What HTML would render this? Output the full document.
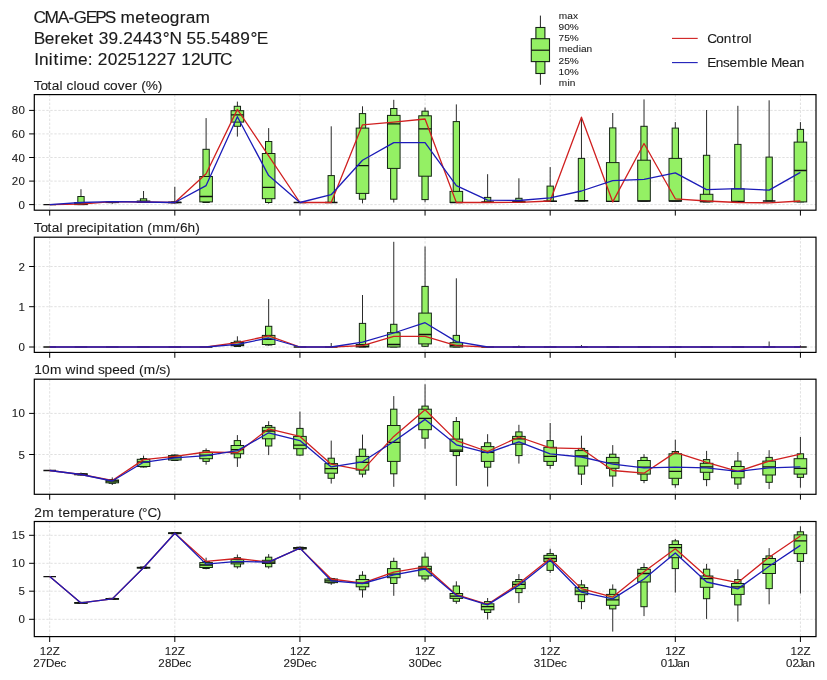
<!DOCTYPE html>
<html><head><meta charset="utf-8"><style>
html,body{margin:0;padding:0;background:#fff;width:827px;height:680px;overflow:hidden}
svg{display:block;will-change:transform}
text{font-family:"Liberation Sans",sans-serif}
</style></head><body>
<svg width="827" height="680" viewBox="0 0 827 680">
<rect width="827" height="680" fill="#fff"/>
<text transform="translate(34.3,23.1) scale(1.06,1)" x="-0.82 9.62 22.21 32.36 37.09 48.48 57.45 66.44 76.54 81.39 95.2 104.79 109.83 118.75 127.8 137.22 142.84 152.11" y="0" font-size="16.32" fill="#1a1a1a" stroke="#1a1a1a" stroke-width="0.13" style="font-kerning:none">CMA-GEPS meteogram</text>
<text transform="translate(34.3,43.9) scale(1.06,1)" x="-0.46 9.9 19.17 24.65 33.63 41.58 50.91 56.07 60.73 69.98 79.18 83.84 93.08 102.32 111.57 121.1 127.53 138.9 143.56 152.81 162.01 166.67 175.91 185.16 194.4 203.93 209.97" y="0" font-size="16.32" fill="#1a1a1a" stroke="#1a1a1a" stroke-width="0.13" style="font-kerning:none">Bereket 39.2443°N 55.5489°E</text>
<text transform="translate(34.3,64.5) scale(1.06,1)" x="-0.12 4.35 13.7 18.11 23.43 27.54 41.35 50.53 55.29 59.95 69.19 78.44 87.68 96.93 106.17 115.41 124.66 133.86 138.52 147.76 156.35 167.01 175.18" y="0" font-size="16.32" fill="#1a1a1a" stroke="#1a1a1a" stroke-width="0.13" style="font-kerning:none">Initime: 20251227 12UTC</text>
<g>
<line x1="540.4" y1="15.6" x2="540.4" y2="84.8" stroke="#222" stroke-width="1"/>
<rect x="535.9" y="27.5" width="9" height="46" fill="#94f064" stroke="#142414" stroke-width="1.1"/>
<rect x="531.3" y="38.7" width="18.2" height="22.9" fill="#94f064" stroke="#142414" stroke-width="1.1"/>
<line x1="531.3" y1="50.2" x2="549.5" y2="50.2" stroke="#111" stroke-width="1.2"/>
</g>
<text transform="translate(558.5,18.5) scale(1.06,1)" x="0.16 8.22 13.6" y="0" font-size="9.54" fill="#1a1a1a" stroke="#1a1a1a" stroke-width="0.08" style="font-kerning:none">max</text>
<text transform="translate(558.5,29.8) scale(1.06,1)" x="0.05 5.45 10.6" y="0" font-size="9.54" fill="#1a1a1a" stroke="#1a1a1a" stroke-width="0.08" style="font-kerning:none">90%</text>
<text transform="translate(558.5,41.1) scale(1.06,1)" x="0.05 5.45 10.6" y="0" font-size="9.54" fill="#1a1a1a" stroke="#1a1a1a" stroke-width="0.08" style="font-kerning:none">75%</text>
<text transform="translate(558.5,52.4) scale(1.06,1)" x="0.16 8.23 13.54 19 21.19 26.48" y="0" font-size="9.54" fill="#1a1a1a" stroke="#1a1a1a" stroke-width="0.08" style="font-kerning:none">median</text>
<text transform="translate(558.5,63.7) scale(1.06,1)" x="0.05 5.45 10.6" y="0" font-size="9.54" fill="#1a1a1a" stroke="#1a1a1a" stroke-width="0.08" style="font-kerning:none">25%</text>
<text transform="translate(558.5,75) scale(1.06,1)" x="0.05 5.45 10.6" y="0" font-size="9.54" fill="#1a1a1a" stroke="#1a1a1a" stroke-width="0.08" style="font-kerning:none">10%</text>
<text transform="translate(558.5,86.3) scale(1.06,1)" x="0.16 8.39 10.67" y="0" font-size="9.54" fill="#1a1a1a" stroke="#1a1a1a" stroke-width="0.08" style="font-kerning:none">min</text>
<line x1="672" y1="38.4" x2="697.7" y2="38.4" stroke="#d02020" stroke-width="1.1"/>
<line x1="672" y1="62.6" x2="697.7" y2="62.6" stroke="#1c1cb8" stroke-width="1.1"/>
<text transform="translate(707.9,42.8) scale(1.06,1)" x="-0.65 7.93 15.07 22.74 26.99 31.29 38.41" y="0" font-size="12.87" fill="#1a1a1a" stroke="#1a1a1a" stroke-width="0.1" style="font-kerning:none">Control</text>
<text transform="translate(707.9,67) scale(1.06,1)" x="-0.67 7.3 14.28 20.43 27.75 38.76 46.14 49.1 56.24 59.44 69.69 76.73 83.87" y="0" font-size="12.87" fill="#1a1a1a" stroke="#1a1a1a" stroke-width="0.1" style="font-kerning:none">Ensemble Mean</text>
<text transform="translate(34.3,89.8) scale(1.06,1)" x="-0.43 5.97 12.56 16.53 23.81 26.87 30.42 36.97 39.92 47.08 54.37 61.64 65.19 71.5 78.78 85.35 92.69 97.23 100.95 105.06 116.35" y="0" font-size="12.91" fill="#1a1a1a" stroke="#1a1a1a" stroke-width="0.1" style="font-kerning:none">Total cloud cover (%)</text>
<clipPath id="c0"><rect x="34.3" y="94.6" width="781.7" height="115.6"/></clipPath>
<g stroke="#e0e0e0" stroke-width="1" stroke-dasharray="2.4,1.6">
<line x1="49.7" y1="94.6" x2="49.7" y2="210.2"/>
<line x1="174.82" y1="94.6" x2="174.82" y2="210.2"/>
<line x1="299.94" y1="94.6" x2="299.94" y2="210.2"/>
<line x1="425.06" y1="94.6" x2="425.06" y2="210.2"/>
<line x1="550.18" y1="94.6" x2="550.18" y2="210.2"/>
<line x1="675.3" y1="94.6" x2="675.3" y2="210.2"/>
<line x1="800.42" y1="94.6" x2="800.42" y2="210.2"/>
<line x1="34.3" y1="204.6" x2="816" y2="204.6"/>
<line x1="34.3" y1="181.1" x2="816" y2="181.1"/>
<line x1="34.3" y1="157.5" x2="816" y2="157.5"/>
<line x1="34.3" y1="133.9" x2="816" y2="133.9"/>
<line x1="34.3" y1="110.4" x2="816" y2="110.4"/>
</g>
<g clip-path="url(#c0)">
<line x1="49.7" y1="204.6" x2="49.7" y2="204.6" stroke="#2a2a2a" stroke-width="1"/>
<rect x="46.55" y="204.6" width="6.3" height="0" fill="#94f064" stroke="#142414" stroke-width="1"/>
<rect x="43.4" y="204.6" width="12.6" height="0" fill="#94f064" stroke="#142414" stroke-width="1"/>
<line x1="43.4" y1="204.6" x2="56" y2="204.6" stroke="#111" stroke-width="1.3"/>
<line x1="80.98" y1="189.2" x2="80.98" y2="204.6" stroke="#2a2a2a" stroke-width="1"/>
<rect x="77.83" y="196.5" width="6.3" height="8.1" fill="#94f064" stroke="#142414" stroke-width="1"/>
<rect x="74.68" y="202.5" width="12.6" height="2.1" fill="#94f064" stroke="#142414" stroke-width="1"/>
<line x1="74.68" y1="204" x2="87.28" y2="204" stroke="#111" stroke-width="1.3"/>
<line x1="112.26" y1="201" x2="112.26" y2="203.7" stroke="#2a2a2a" stroke-width="1"/>
<rect x="109.11" y="202" width="6.3" height="0.6" fill="#94f064" stroke="#142414" stroke-width="1"/>
<rect x="105.96" y="202.3" width="12.6" height="0.3" fill="#94f064" stroke="#142414" stroke-width="1"/>
<line x1="105.96" y1="202.3" x2="118.56" y2="202.3" stroke="#111" stroke-width="1.3"/>
<line x1="143.54" y1="191" x2="143.54" y2="203" stroke="#2a2a2a" stroke-width="1"/>
<rect x="140.39" y="198.8" width="6.3" height="3.7" fill="#94f064" stroke="#142414" stroke-width="1"/>
<rect x="137.24" y="201" width="12.6" height="1.5" fill="#94f064" stroke="#142414" stroke-width="1"/>
<line x1="137.24" y1="202" x2="149.84" y2="202" stroke="#111" stroke-width="1.3"/>
<line x1="174.82" y1="186.8" x2="174.82" y2="203.5" stroke="#2a2a2a" stroke-width="1"/>
<rect x="171.67" y="201.8" width="6.3" height="1" fill="#94f064" stroke="#142414" stroke-width="1"/>
<rect x="168.52" y="202.2" width="12.6" height="0.6" fill="#94f064" stroke="#142414" stroke-width="1"/>
<line x1="168.52" y1="202.4" x2="181.12" y2="202.4" stroke="#111" stroke-width="1.3"/>
<line x1="206.1" y1="118.1" x2="206.1" y2="202.5" stroke="#2a2a2a" stroke-width="1"/>
<rect x="202.95" y="149.3" width="6.3" height="53.2" fill="#94f064" stroke="#142414" stroke-width="1"/>
<rect x="199.8" y="176.5" width="12.6" height="25.4" fill="#94f064" stroke="#142414" stroke-width="1"/>
<line x1="199.8" y1="196.5" x2="212.4" y2="196.5" stroke="#111" stroke-width="1.3"/>
<line x1="237.38" y1="101.6" x2="237.38" y2="136.6" stroke="#2a2a2a" stroke-width="1"/>
<rect x="234.23" y="106.3" width="6.3" height="20" fill="#94f064" stroke="#142414" stroke-width="1"/>
<rect x="231.08" y="110.7" width="12.6" height="11.4" fill="#94f064" stroke="#142414" stroke-width="1"/>
<line x1="231.08" y1="114.9" x2="243.68" y2="114.9" stroke="#111" stroke-width="1.3"/>
<line x1="268.66" y1="128.1" x2="268.66" y2="203.7" stroke="#2a2a2a" stroke-width="1"/>
<rect x="265.51" y="141.5" width="6.3" height="61" fill="#94f064" stroke="#142414" stroke-width="1"/>
<rect x="262.36" y="153.5" width="12.6" height="45.2" fill="#94f064" stroke="#142414" stroke-width="1"/>
<line x1="262.36" y1="187.4" x2="274.96" y2="187.4" stroke="#111" stroke-width="1.3"/>
<line x1="299.94" y1="202.5" x2="299.94" y2="202.5" stroke="#2a2a2a" stroke-width="1"/>
<rect x="296.79" y="202.5" width="6.3" height="0" fill="#94f064" stroke="#142414" stroke-width="1"/>
<rect x="293.64" y="202.5" width="12.6" height="0" fill="#94f064" stroke="#142414" stroke-width="1"/>
<line x1="293.64" y1="202.5" x2="306.24" y2="202.5" stroke="#111" stroke-width="1.3"/>
<line x1="331.22" y1="126.3" x2="331.22" y2="202.5" stroke="#2a2a2a" stroke-width="1"/>
<rect x="328.07" y="175.6" width="6.3" height="26.9" fill="#94f064" stroke="#142414" stroke-width="1"/>
<rect x="324.92" y="202.5" width="12.6" height="0" fill="#94f064" stroke="#142414" stroke-width="1"/>
<line x1="324.92" y1="202.5" x2="337.52" y2="202.5" stroke="#111" stroke-width="1.3"/>
<line x1="362.5" y1="106.3" x2="362.5" y2="203.4" stroke="#2a2a2a" stroke-width="1"/>
<rect x="359.35" y="113.6" width="6.3" height="85.6" fill="#94f064" stroke="#142414" stroke-width="1"/>
<rect x="356.2" y="128.1" width="12.6" height="65.3" fill="#94f064" stroke="#142414" stroke-width="1"/>
<line x1="356.2" y1="165.6" x2="368.8" y2="165.6" stroke="#111" stroke-width="1.3"/>
<line x1="393.78" y1="99.8" x2="393.78" y2="202.5" stroke="#2a2a2a" stroke-width="1"/>
<rect x="390.63" y="108.5" width="6.3" height="90.7" fill="#94f064" stroke="#142414" stroke-width="1"/>
<rect x="387.48" y="115.4" width="12.6" height="53" fill="#94f064" stroke="#142414" stroke-width="1"/>
<line x1="387.48" y1="123.9" x2="400.08" y2="123.9" stroke="#111" stroke-width="1.3"/>
<line x1="425.06" y1="107.6" x2="425.06" y2="202.3" stroke="#2a2a2a" stroke-width="1"/>
<rect x="421.91" y="111.2" width="6.3" height="88.4" fill="#94f064" stroke="#142414" stroke-width="1"/>
<rect x="418.76" y="115.8" width="12.6" height="60.4" fill="#94f064" stroke="#142414" stroke-width="1"/>
<line x1="418.76" y1="128.8" x2="431.36" y2="128.8" stroke="#111" stroke-width="1.3"/>
<line x1="456.34" y1="104.4" x2="456.34" y2="202.5" stroke="#2a2a2a" stroke-width="1"/>
<rect x="453.19" y="121.6" width="6.3" height="80.9" fill="#94f064" stroke="#142414" stroke-width="1"/>
<rect x="450.04" y="191.4" width="12.6" height="11.1" fill="#94f064" stroke="#142414" stroke-width="1"/>
<line x1="450.04" y1="202.5" x2="462.64" y2="202.5" stroke="#111" stroke-width="1.3"/>
<line x1="487.62" y1="174.2" x2="487.62" y2="202.5" stroke="#2a2a2a" stroke-width="1"/>
<rect x="484.47" y="197.4" width="6.3" height="5.1" fill="#94f064" stroke="#142414" stroke-width="1"/>
<rect x="481.32" y="202.5" width="12.6" height="0" fill="#94f064" stroke="#142414" stroke-width="1"/>
<line x1="481.32" y1="202" x2="493.92" y2="202" stroke="#111" stroke-width="1.3"/>
<line x1="518.9" y1="178.3" x2="518.9" y2="202" stroke="#2a2a2a" stroke-width="1"/>
<rect x="515.75" y="198.3" width="6.3" height="3.7" fill="#94f064" stroke="#142414" stroke-width="1"/>
<rect x="512.6" y="201.8" width="12.6" height="0.2" fill="#94f064" stroke="#142414" stroke-width="1"/>
<line x1="512.6" y1="201.8" x2="525.2" y2="201.8" stroke="#111" stroke-width="1.3"/>
<line x1="550.18" y1="167.1" x2="550.18" y2="201.5" stroke="#2a2a2a" stroke-width="1"/>
<rect x="547.03" y="186.1" width="6.3" height="15.4" fill="#94f064" stroke="#142414" stroke-width="1"/>
<rect x="543.88" y="201" width="12.6" height="0.5" fill="#94f064" stroke="#142414" stroke-width="1"/>
<line x1="543.88" y1="201.3" x2="556.48" y2="201.3" stroke="#111" stroke-width="1.3"/>
<line x1="581.46" y1="117.2" x2="581.46" y2="201" stroke="#2a2a2a" stroke-width="1"/>
<rect x="578.31" y="158.4" width="6.3" height="42.6" fill="#94f064" stroke="#142414" stroke-width="1"/>
<rect x="575.16" y="200.5" width="12.6" height="0.5" fill="#94f064" stroke="#142414" stroke-width="1"/>
<line x1="575.16" y1="200.7" x2="587.76" y2="200.7" stroke="#111" stroke-width="1.3"/>
<line x1="612.74" y1="113" x2="612.74" y2="201.4" stroke="#2a2a2a" stroke-width="1"/>
<rect x="609.59" y="127.9" width="6.3" height="73.5" fill="#94f064" stroke="#142414" stroke-width="1"/>
<rect x="606.44" y="162.6" width="12.6" height="38.8" fill="#94f064" stroke="#142414" stroke-width="1"/>
<line x1="606.44" y1="201.4" x2="619.04" y2="201.4" stroke="#111" stroke-width="1.3"/>
<line x1="644.02" y1="99.4" x2="644.02" y2="201" stroke="#2a2a2a" stroke-width="1"/>
<rect x="640.87" y="126.3" width="6.3" height="74.7" fill="#94f064" stroke="#142414" stroke-width="1"/>
<rect x="637.72" y="160.2" width="12.6" height="40.8" fill="#94f064" stroke="#142414" stroke-width="1"/>
<line x1="637.72" y1="201" x2="650.32" y2="201" stroke="#111" stroke-width="1.3"/>
<line x1="675.3" y1="122.1" x2="675.3" y2="201" stroke="#2a2a2a" stroke-width="1"/>
<rect x="672.15" y="128.1" width="6.3" height="72.9" fill="#94f064" stroke="#142414" stroke-width="1"/>
<rect x="669" y="158.4" width="12.6" height="42.6" fill="#94f064" stroke="#142414" stroke-width="1"/>
<line x1="669" y1="201" x2="681.6" y2="201" stroke="#111" stroke-width="1.3"/>
<line x1="706.58" y1="110" x2="706.58" y2="201.9" stroke="#2a2a2a" stroke-width="1"/>
<rect x="703.43" y="155.3" width="6.3" height="46.6" fill="#94f064" stroke="#142414" stroke-width="1"/>
<rect x="700.28" y="194.3" width="12.6" height="7.6" fill="#94f064" stroke="#142414" stroke-width="1"/>
<line x1="700.28" y1="201.4" x2="712.88" y2="201.4" stroke="#111" stroke-width="1.3"/>
<line x1="737.86" y1="105.8" x2="737.86" y2="201.9" stroke="#2a2a2a" stroke-width="1"/>
<rect x="734.71" y="144.4" width="6.3" height="57.5" fill="#94f064" stroke="#142414" stroke-width="1"/>
<rect x="731.56" y="188.9" width="12.6" height="13" fill="#94f064" stroke="#142414" stroke-width="1"/>
<line x1="731.56" y1="201.4" x2="744.16" y2="201.4" stroke="#111" stroke-width="1.3"/>
<line x1="769.14" y1="100.3" x2="769.14" y2="201" stroke="#2a2a2a" stroke-width="1"/>
<rect x="765.99" y="157.1" width="6.3" height="43.9" fill="#94f064" stroke="#142414" stroke-width="1"/>
<rect x="762.84" y="201" width="12.6" height="0" fill="#94f064" stroke="#142414" stroke-width="1"/>
<line x1="762.84" y1="201" x2="775.44" y2="201" stroke="#111" stroke-width="1.3"/>
<line x1="800.42" y1="122.1" x2="800.42" y2="201.9" stroke="#2a2a2a" stroke-width="1"/>
<rect x="797.27" y="129.4" width="6.3" height="72.5" fill="#94f064" stroke="#142414" stroke-width="1"/>
<rect x="794.12" y="142.1" width="12.6" height="59.8" fill="#94f064" stroke="#142414" stroke-width="1"/>
<line x1="794.12" y1="170.5" x2="806.72" y2="170.5" stroke="#111" stroke-width="1.3"/>
<polyline fill="none" stroke="#d02020" stroke-width="1.3" stroke-linejoin="round" points="49.7,204.6 80.98,204.2 112.26,201.7 143.54,202 174.82,202.5 206.1,173.8 237.38,109.4 268.66,155.9 299.94,202.5 331.22,202.5 362.5,124.8 393.78,122.1 425.06,119 456.34,202.5 487.62,202.5 518.9,202.3 550.18,201 581.46,117.2 612.74,201.9 644.02,143.5 675.3,198.8 706.58,201 737.86,202.5 769.14,202.8 800.42,201"/>
<polyline fill="none" stroke="#1c1cb8" stroke-width="1.3" stroke-linejoin="round" points="49.7,204.6 80.98,202.5 112.26,201.7 143.54,202 174.82,202.5 206.1,185.6 237.38,116.7 268.66,175.6 299.94,202.5 331.22,194.7 362.5,160.2 393.78,142.6 425.06,142.6 456.34,185.6 487.62,200.1 518.9,200.5 550.18,197.8 581.46,191 612.74,180.7 644.02,179.3 675.3,172.9 706.58,189.6 737.86,188.7 769.14,190.1 800.42,172.4"/>
</g>
<rect x="34.3" y="94.6" width="781.7" height="115.6" fill="none" stroke="#000" stroke-width="1.2"/>
<line x1="29.1" y1="204.6" x2="34.3" y2="204.6" stroke="#000" stroke-width="1"/>
<text transform="translate(18.35,208.6) scale(1.06,1)" x="0.06" y="0" font-size="10.91" fill="#1a1a1a" stroke="#1a1a1a" stroke-width="0.09" style="font-kerning:none">0</text>
<line x1="29.1" y1="181.1" x2="34.3" y2="181.1" stroke="#000" stroke-width="1"/>
<text transform="translate(11.79,185.1) scale(1.06,1)" x="0.06 6.24" y="0" font-size="10.91" fill="#1a1a1a" stroke="#1a1a1a" stroke-width="0.09" style="font-kerning:none">20</text>
<line x1="29.1" y1="157.5" x2="34.3" y2="157.5" stroke="#000" stroke-width="1"/>
<text transform="translate(11.79,161.5) scale(1.06,1)" x="0.06 6.24" y="0" font-size="10.91" fill="#1a1a1a" stroke="#1a1a1a" stroke-width="0.09" style="font-kerning:none">40</text>
<line x1="29.1" y1="133.9" x2="34.3" y2="133.9" stroke="#000" stroke-width="1"/>
<text transform="translate(11.79,137.9) scale(1.06,1)" x="0.06 6.24" y="0" font-size="10.91" fill="#1a1a1a" stroke="#1a1a1a" stroke-width="0.09" style="font-kerning:none">60</text>
<line x1="29.1" y1="110.4" x2="34.3" y2="110.4" stroke="#000" stroke-width="1"/>
<text transform="translate(11.79,114.4) scale(1.06,1)" x="0.06 6.24" y="0" font-size="10.91" fill="#1a1a1a" stroke="#1a1a1a" stroke-width="0.09" style="font-kerning:none">80</text>
<line x1="49.7" y1="210.2" x2="49.7" y2="215.6" stroke="#000" stroke-width="1"/>
<line x1="174.82" y1="210.2" x2="174.82" y2="215.6" stroke="#000" stroke-width="1"/>
<line x1="299.94" y1="210.2" x2="299.94" y2="215.6" stroke="#000" stroke-width="1"/>
<line x1="425.06" y1="210.2" x2="425.06" y2="215.6" stroke="#000" stroke-width="1"/>
<line x1="550.18" y1="210.2" x2="550.18" y2="215.6" stroke="#000" stroke-width="1"/>
<line x1="675.3" y1="210.2" x2="675.3" y2="215.6" stroke="#000" stroke-width="1"/>
<line x1="800.42" y1="210.2" x2="800.42" y2="215.6" stroke="#000" stroke-width="1"/>
<text transform="translate(34.3,232.4) scale(1.06,1)" x="-0.43 5.97 12.56 16.53 23.81 26.87 30.55 38 42.33 49.26 55.8 58.89 66.29 69.78 73.76 81.33 85.54 88.49 95.65 102.91 106.62 111.24 122.43 133.54 137.34 144.64 151.96" y="0" font-size="12.91" fill="#1a1a1a" stroke="#1a1a1a" stroke-width="0.1" style="font-kerning:none">Total precipitation (mm/6h)</text>
<clipPath id="c1"><rect x="34.3" y="237.2" width="781.7" height="115.2"/></clipPath>
<g stroke="#e0e0e0" stroke-width="1" stroke-dasharray="2.4,1.6">
<line x1="49.7" y1="237.2" x2="49.7" y2="352.4"/>
<line x1="174.82" y1="237.2" x2="174.82" y2="352.4"/>
<line x1="299.94" y1="237.2" x2="299.94" y2="352.4"/>
<line x1="425.06" y1="237.2" x2="425.06" y2="352.4"/>
<line x1="550.18" y1="237.2" x2="550.18" y2="352.4"/>
<line x1="675.3" y1="237.2" x2="675.3" y2="352.4"/>
<line x1="800.42" y1="237.2" x2="800.42" y2="352.4"/>
<line x1="34.3" y1="347" x2="816" y2="347"/>
<line x1="34.3" y1="306.7" x2="816" y2="306.7"/>
<line x1="34.3" y1="266.5" x2="816" y2="266.5"/>
</g>
<g clip-path="url(#c1)">
<line x1="49.7" y1="347" x2="49.7" y2="347" stroke="#2a2a2a" stroke-width="1"/>
<rect x="46.55" y="347" width="6.3" height="0" fill="#94f064" stroke="#142414" stroke-width="1"/>
<rect x="43.4" y="347" width="12.6" height="0" fill="#94f064" stroke="#142414" stroke-width="1"/>
<line x1="43.4" y1="347" x2="56" y2="347" stroke="#111" stroke-width="1.3"/>
<line x1="80.98" y1="347" x2="80.98" y2="347" stroke="#2a2a2a" stroke-width="1"/>
<rect x="77.83" y="347" width="6.3" height="0" fill="#94f064" stroke="#142414" stroke-width="1"/>
<rect x="74.68" y="347" width="12.6" height="0" fill="#94f064" stroke="#142414" stroke-width="1"/>
<line x1="74.68" y1="347" x2="87.28" y2="347" stroke="#111" stroke-width="1.3"/>
<line x1="112.26" y1="347" x2="112.26" y2="347" stroke="#2a2a2a" stroke-width="1"/>
<rect x="109.11" y="347" width="6.3" height="0" fill="#94f064" stroke="#142414" stroke-width="1"/>
<rect x="105.96" y="347" width="12.6" height="0" fill="#94f064" stroke="#142414" stroke-width="1"/>
<line x1="105.96" y1="347" x2="118.56" y2="347" stroke="#111" stroke-width="1.3"/>
<line x1="143.54" y1="347" x2="143.54" y2="347" stroke="#2a2a2a" stroke-width="1"/>
<rect x="140.39" y="347" width="6.3" height="0" fill="#94f064" stroke="#142414" stroke-width="1"/>
<rect x="137.24" y="347" width="12.6" height="0" fill="#94f064" stroke="#142414" stroke-width="1"/>
<line x1="137.24" y1="347" x2="149.84" y2="347" stroke="#111" stroke-width="1.3"/>
<line x1="174.82" y1="347" x2="174.82" y2="347" stroke="#2a2a2a" stroke-width="1"/>
<rect x="171.67" y="347" width="6.3" height="0" fill="#94f064" stroke="#142414" stroke-width="1"/>
<rect x="168.52" y="347" width="12.6" height="0" fill="#94f064" stroke="#142414" stroke-width="1"/>
<line x1="168.52" y1="347" x2="181.12" y2="347" stroke="#111" stroke-width="1.3"/>
<line x1="206.1" y1="347" x2="206.1" y2="347" stroke="#2a2a2a" stroke-width="1"/>
<rect x="202.95" y="347" width="6.3" height="0" fill="#94f064" stroke="#142414" stroke-width="1"/>
<rect x="199.8" y="347" width="12.6" height="0" fill="#94f064" stroke="#142414" stroke-width="1"/>
<line x1="199.8" y1="347" x2="212.4" y2="347" stroke="#111" stroke-width="1.3"/>
<line x1="237.38" y1="336.3" x2="237.38" y2="347" stroke="#2a2a2a" stroke-width="1"/>
<rect x="234.23" y="341.2" width="6.3" height="5.3" fill="#94f064" stroke="#142414" stroke-width="1"/>
<rect x="231.08" y="342.5" width="12.6" height="3.2" fill="#94f064" stroke="#142414" stroke-width="1"/>
<line x1="231.08" y1="345" x2="243.68" y2="345" stroke="#111" stroke-width="1.3"/>
<line x1="268.66" y1="299.1" x2="268.66" y2="345.7" stroke="#2a2a2a" stroke-width="1"/>
<rect x="265.51" y="326.3" width="6.3" height="18.7" fill="#94f064" stroke="#142414" stroke-width="1"/>
<rect x="262.36" y="335.4" width="12.6" height="9.1" fill="#94f064" stroke="#142414" stroke-width="1"/>
<line x1="262.36" y1="339.4" x2="274.96" y2="339.4" stroke="#111" stroke-width="1.3"/>
<line x1="299.94" y1="347" x2="299.94" y2="347" stroke="#2a2a2a" stroke-width="1"/>
<rect x="296.79" y="347" width="6.3" height="0" fill="#94f064" stroke="#142414" stroke-width="1"/>
<rect x="293.64" y="347" width="12.6" height="0" fill="#94f064" stroke="#142414" stroke-width="1"/>
<line x1="293.64" y1="347" x2="306.24" y2="347" stroke="#111" stroke-width="1.3"/>
<line x1="331.22" y1="343" x2="331.22" y2="347" stroke="#2a2a2a" stroke-width="1"/>
<rect x="328.07" y="347" width="6.3" height="0" fill="#94f064" stroke="#142414" stroke-width="1"/>
<rect x="324.92" y="347" width="12.6" height="0" fill="#94f064" stroke="#142414" stroke-width="1"/>
<line x1="324.92" y1="347" x2="337.52" y2="347" stroke="#111" stroke-width="1.3"/>
<line x1="362.5" y1="295" x2="362.5" y2="347" stroke="#2a2a2a" stroke-width="1"/>
<rect x="359.35" y="323.4" width="6.3" height="23.6" fill="#94f064" stroke="#142414" stroke-width="1"/>
<rect x="356.2" y="344.5" width="12.6" height="2.5" fill="#94f064" stroke="#142414" stroke-width="1"/>
<line x1="356.2" y1="346.3" x2="368.8" y2="346.3" stroke="#111" stroke-width="1.3"/>
<line x1="393.78" y1="241.8" x2="393.78" y2="347" stroke="#2a2a2a" stroke-width="1"/>
<rect x="390.63" y="324.3" width="6.3" height="22.7" fill="#94f064" stroke="#142414" stroke-width="1"/>
<rect x="387.48" y="332.7" width="12.6" height="14.3" fill="#94f064" stroke="#142414" stroke-width="1"/>
<line x1="387.48" y1="344.5" x2="400.08" y2="344.5" stroke="#111" stroke-width="1.3"/>
<line x1="425.06" y1="246.5" x2="425.06" y2="347" stroke="#2a2a2a" stroke-width="1"/>
<rect x="421.91" y="286.4" width="6.3" height="59.9" fill="#94f064" stroke="#142414" stroke-width="1"/>
<rect x="418.76" y="313.1" width="12.6" height="30.8" fill="#94f064" stroke="#142414" stroke-width="1"/>
<line x1="418.76" y1="334.5" x2="431.36" y2="334.5" stroke="#111" stroke-width="1.3"/>
<line x1="456.34" y1="278.3" x2="456.34" y2="347" stroke="#2a2a2a" stroke-width="1"/>
<rect x="453.19" y="335.4" width="6.3" height="11.6" fill="#94f064" stroke="#142414" stroke-width="1"/>
<rect x="450.04" y="342.7" width="12.6" height="4.3" fill="#94f064" stroke="#142414" stroke-width="1"/>
<line x1="450.04" y1="345.5" x2="462.64" y2="345.5" stroke="#111" stroke-width="1.3"/>
<line x1="487.62" y1="347" x2="487.62" y2="347" stroke="#2a2a2a" stroke-width="1"/>
<rect x="484.47" y="347" width="6.3" height="0" fill="#94f064" stroke="#142414" stroke-width="1"/>
<rect x="481.32" y="347" width="12.6" height="0" fill="#94f064" stroke="#142414" stroke-width="1"/>
<line x1="481.32" y1="347" x2="493.92" y2="347" stroke="#111" stroke-width="1.3"/>
<line x1="518.9" y1="345.5" x2="518.9" y2="347" stroke="#2a2a2a" stroke-width="1"/>
<rect x="515.75" y="347" width="6.3" height="0" fill="#94f064" stroke="#142414" stroke-width="1"/>
<rect x="512.6" y="347" width="12.6" height="0" fill="#94f064" stroke="#142414" stroke-width="1"/>
<line x1="512.6" y1="347" x2="525.2" y2="347" stroke="#111" stroke-width="1.3"/>
<line x1="550.18" y1="347" x2="550.18" y2="347" stroke="#2a2a2a" stroke-width="1"/>
<rect x="547.03" y="347" width="6.3" height="0" fill="#94f064" stroke="#142414" stroke-width="1"/>
<rect x="543.88" y="347" width="12.6" height="0" fill="#94f064" stroke="#142414" stroke-width="1"/>
<line x1="543.88" y1="347" x2="556.48" y2="347" stroke="#111" stroke-width="1.3"/>
<line x1="581.46" y1="345" x2="581.46" y2="347" stroke="#2a2a2a" stroke-width="1"/>
<rect x="578.31" y="347" width="6.3" height="0" fill="#94f064" stroke="#142414" stroke-width="1"/>
<rect x="575.16" y="347" width="12.6" height="0" fill="#94f064" stroke="#142414" stroke-width="1"/>
<line x1="575.16" y1="347" x2="587.76" y2="347" stroke="#111" stroke-width="1.3"/>
<line x1="612.74" y1="347" x2="612.74" y2="347" stroke="#2a2a2a" stroke-width="1"/>
<rect x="609.59" y="347" width="6.3" height="0" fill="#94f064" stroke="#142414" stroke-width="1"/>
<rect x="606.44" y="347" width="12.6" height="0" fill="#94f064" stroke="#142414" stroke-width="1"/>
<line x1="606.44" y1="347" x2="619.04" y2="347" stroke="#111" stroke-width="1.3"/>
<line x1="644.02" y1="347" x2="644.02" y2="347" stroke="#2a2a2a" stroke-width="1"/>
<rect x="640.87" y="347" width="6.3" height="0" fill="#94f064" stroke="#142414" stroke-width="1"/>
<rect x="637.72" y="347" width="12.6" height="0" fill="#94f064" stroke="#142414" stroke-width="1"/>
<line x1="637.72" y1="347" x2="650.32" y2="347" stroke="#111" stroke-width="1.3"/>
<line x1="675.3" y1="347" x2="675.3" y2="347" stroke="#2a2a2a" stroke-width="1"/>
<rect x="672.15" y="347" width="6.3" height="0" fill="#94f064" stroke="#142414" stroke-width="1"/>
<rect x="669" y="347" width="12.6" height="0" fill="#94f064" stroke="#142414" stroke-width="1"/>
<line x1="669" y1="347" x2="681.6" y2="347" stroke="#111" stroke-width="1.3"/>
<line x1="706.58" y1="347" x2="706.58" y2="347" stroke="#2a2a2a" stroke-width="1"/>
<rect x="703.43" y="347" width="6.3" height="0" fill="#94f064" stroke="#142414" stroke-width="1"/>
<rect x="700.28" y="347" width="12.6" height="0" fill="#94f064" stroke="#142414" stroke-width="1"/>
<line x1="700.28" y1="347" x2="712.88" y2="347" stroke="#111" stroke-width="1.3"/>
<line x1="737.86" y1="347" x2="737.86" y2="347" stroke="#2a2a2a" stroke-width="1"/>
<rect x="734.71" y="347" width="6.3" height="0" fill="#94f064" stroke="#142414" stroke-width="1"/>
<rect x="731.56" y="347" width="12.6" height="0" fill="#94f064" stroke="#142414" stroke-width="1"/>
<line x1="731.56" y1="347" x2="744.16" y2="347" stroke="#111" stroke-width="1.3"/>
<line x1="769.14" y1="341.5" x2="769.14" y2="347" stroke="#2a2a2a" stroke-width="1"/>
<rect x="765.99" y="347" width="6.3" height="0" fill="#94f064" stroke="#142414" stroke-width="1"/>
<rect x="762.84" y="347" width="12.6" height="0" fill="#94f064" stroke="#142414" stroke-width="1"/>
<line x1="762.84" y1="347" x2="775.44" y2="347" stroke="#111" stroke-width="1.3"/>
<line x1="800.42" y1="345.5" x2="800.42" y2="347" stroke="#2a2a2a" stroke-width="1"/>
<rect x="797.27" y="347" width="6.3" height="0" fill="#94f064" stroke="#142414" stroke-width="1"/>
<rect x="794.12" y="347" width="12.6" height="0" fill="#94f064" stroke="#142414" stroke-width="1"/>
<line x1="794.12" y1="347" x2="806.72" y2="347" stroke="#111" stroke-width="1.3"/>
<polyline fill="none" stroke="#d02020" stroke-width="1.3" stroke-linejoin="round" points="49.7,347 80.98,347 112.26,347 143.54,347 174.82,347 206.1,347 237.38,342.7 268.66,335.8 299.94,347 331.22,347 362.5,345.7 393.78,336.3 425.06,336.3 456.34,345.7 487.62,347 518.9,347 550.18,347 581.46,347 612.74,347 644.02,347 675.3,347 706.58,347 737.86,347 769.14,347 800.42,347"/>
<polyline fill="none" stroke="#1c1cb8" stroke-width="1.3" stroke-linejoin="round" points="49.7,347 80.98,347 112.26,347 143.54,347 174.82,347 206.1,347 237.38,344.3 268.66,338 299.94,347 331.22,347 362.5,342.1 393.78,333 425.06,322.7 456.34,341.6 487.62,347 518.9,347 550.18,347 581.46,347 612.74,347 644.02,347 675.3,347 706.58,347 737.86,347 769.14,347 800.42,347"/>
</g>
<rect x="34.3" y="237.2" width="781.7" height="115.2" fill="none" stroke="#000" stroke-width="1.2"/>
<line x1="29.1" y1="347" x2="34.3" y2="347" stroke="#000" stroke-width="1"/>
<text transform="translate(18.35,351) scale(1.06,1)" x="0.06" y="0" font-size="10.91" fill="#1a1a1a" stroke="#1a1a1a" stroke-width="0.09" style="font-kerning:none">0</text>
<line x1="29.1" y1="306.7" x2="34.3" y2="306.7" stroke="#000" stroke-width="1"/>
<text transform="translate(18.35,310.7) scale(1.06,1)" x="0.06" y="0" font-size="10.91" fill="#1a1a1a" stroke="#1a1a1a" stroke-width="0.09" style="font-kerning:none">1</text>
<line x1="29.1" y1="266.5" x2="34.3" y2="266.5" stroke="#000" stroke-width="1"/>
<text transform="translate(18.35,270.5) scale(1.06,1)" x="0.06" y="0" font-size="10.91" fill="#1a1a1a" stroke="#1a1a1a" stroke-width="0.09" style="font-kerning:none">2</text>
<line x1="49.7" y1="352.4" x2="49.7" y2="357.8" stroke="#000" stroke-width="1"/>
<line x1="174.82" y1="352.4" x2="174.82" y2="357.8" stroke="#000" stroke-width="1"/>
<line x1="299.94" y1="352.4" x2="299.94" y2="357.8" stroke="#000" stroke-width="1"/>
<line x1="425.06" y1="352.4" x2="425.06" y2="357.8" stroke="#000" stroke-width="1"/>
<line x1="550.18" y1="352.4" x2="550.18" y2="357.8" stroke="#000" stroke-width="1"/>
<line x1="675.3" y1="352.4" x2="675.3" y2="357.8" stroke="#000" stroke-width="1"/>
<line x1="800.42" y1="352.4" x2="800.42" y2="357.8" stroke="#000" stroke-width="1"/>
<text transform="translate(34.3,374.4) scale(1.06,1)" x="0.07 7.38 14.84 25.85 29.51 39.03 42.11 49.4 56.67 60.05 66.33 73.51 80.58 87.77 95.03 98.75 103.36 114.47 117.97 124.28" y="0" font-size="12.91" fill="#1a1a1a" stroke="#1a1a1a" stroke-width="0.1" style="font-kerning:none">10m wind speed (m/s)</text>
<clipPath id="c2"><rect x="34.3" y="379.2" width="781.7" height="115.1"/></clipPath>
<g stroke="#e0e0e0" stroke-width="1" stroke-dasharray="2.4,1.6">
<line x1="49.7" y1="379.2" x2="49.7" y2="494.3"/>
<line x1="174.82" y1="379.2" x2="174.82" y2="494.3"/>
<line x1="299.94" y1="379.2" x2="299.94" y2="494.3"/>
<line x1="425.06" y1="379.2" x2="425.06" y2="494.3"/>
<line x1="550.18" y1="379.2" x2="550.18" y2="494.3"/>
<line x1="675.3" y1="379.2" x2="675.3" y2="494.3"/>
<line x1="800.42" y1="379.2" x2="800.42" y2="494.3"/>
<line x1="34.3" y1="454.5" x2="816" y2="454.5"/>
<line x1="34.3" y1="413.4" x2="816" y2="413.4"/>
</g>
<g clip-path="url(#c2)">
<line x1="49.7" y1="470.5" x2="49.7" y2="470.5" stroke="#2a2a2a" stroke-width="1"/>
<rect x="46.55" y="470.5" width="6.3" height="0" fill="#94f064" stroke="#142414" stroke-width="1"/>
<rect x="43.4" y="470.5" width="12.6" height="0" fill="#94f064" stroke="#142414" stroke-width="1"/>
<line x1="43.4" y1="470.5" x2="56" y2="470.5" stroke="#111" stroke-width="1.3"/>
<line x1="80.98" y1="472.5" x2="80.98" y2="475.5" stroke="#2a2a2a" stroke-width="1"/>
<rect x="77.83" y="473.5" width="6.3" height="1.5" fill="#94f064" stroke="#142414" stroke-width="1"/>
<rect x="74.68" y="473.8" width="12.6" height="1" fill="#94f064" stroke="#142414" stroke-width="1"/>
<line x1="74.68" y1="474.2" x2="87.28" y2="474.2" stroke="#111" stroke-width="1.3"/>
<line x1="112.26" y1="477.4" x2="112.26" y2="485" stroke="#2a2a2a" stroke-width="1"/>
<rect x="109.11" y="479.5" width="6.3" height="3.8" fill="#94f064" stroke="#142414" stroke-width="1"/>
<rect x="105.96" y="480" width="12.6" height="2.8" fill="#94f064" stroke="#142414" stroke-width="1"/>
<line x1="105.96" y1="481" x2="118.56" y2="481" stroke="#111" stroke-width="1.3"/>
<line x1="143.54" y1="455.6" x2="143.54" y2="467.5" stroke="#2a2a2a" stroke-width="1"/>
<rect x="140.39" y="458.5" width="6.3" height="8.5" fill="#94f064" stroke="#142414" stroke-width="1"/>
<rect x="137.24" y="459.3" width="12.6" height="7.2" fill="#94f064" stroke="#142414" stroke-width="1"/>
<line x1="137.24" y1="462" x2="149.84" y2="462" stroke="#111" stroke-width="1.3"/>
<line x1="174.82" y1="454.5" x2="174.82" y2="461" stroke="#2a2a2a" stroke-width="1"/>
<rect x="171.67" y="455" width="6.3" height="5.5" fill="#94f064" stroke="#142414" stroke-width="1"/>
<rect x="168.52" y="455.6" width="12.6" height="4.4" fill="#94f064" stroke="#142414" stroke-width="1"/>
<line x1="168.52" y1="457.5" x2="181.12" y2="457.5" stroke="#111" stroke-width="1.3"/>
<line x1="206.1" y1="448.4" x2="206.1" y2="464.7" stroke="#2a2a2a" stroke-width="1"/>
<rect x="202.95" y="450.6" width="6.3" height="10.8" fill="#94f064" stroke="#142414" stroke-width="1"/>
<rect x="199.8" y="452.4" width="12.6" height="6.3" fill="#94f064" stroke="#142414" stroke-width="1"/>
<line x1="199.8" y1="455.1" x2="212.4" y2="455.1" stroke="#111" stroke-width="1.3"/>
<line x1="237.38" y1="435.1" x2="237.38" y2="466.9" stroke="#2a2a2a" stroke-width="1"/>
<rect x="234.23" y="440.6" width="6.3" height="17.2" fill="#94f064" stroke="#142414" stroke-width="1"/>
<rect x="231.08" y="445.5" width="12.6" height="8.3" fill="#94f064" stroke="#142414" stroke-width="1"/>
<line x1="231.08" y1="449.6" x2="243.68" y2="449.6" stroke="#111" stroke-width="1.3"/>
<line x1="268.66" y1="421.2" x2="268.66" y2="455.1" stroke="#2a2a2a" stroke-width="1"/>
<rect x="265.51" y="425.5" width="6.3" height="20.5" fill="#94f064" stroke="#142414" stroke-width="1"/>
<rect x="262.36" y="427.3" width="12.6" height="11.5" fill="#94f064" stroke="#142414" stroke-width="1"/>
<line x1="262.36" y1="431" x2="274.96" y2="431" stroke="#111" stroke-width="1.3"/>
<line x1="299.94" y1="411.6" x2="299.94" y2="455.6" stroke="#2a2a2a" stroke-width="1"/>
<rect x="296.79" y="428.4" width="6.3" height="26.7" fill="#94f064" stroke="#142414" stroke-width="1"/>
<rect x="293.64" y="436.4" width="12.6" height="12.3" fill="#94f064" stroke="#142414" stroke-width="1"/>
<line x1="293.64" y1="445.1" x2="306.24" y2="445.1" stroke="#111" stroke-width="1.3"/>
<line x1="331.22" y1="440.6" x2="331.22" y2="483.6" stroke="#2a2a2a" stroke-width="1"/>
<rect x="328.07" y="458.2" width="6.3" height="20.1" fill="#94f064" stroke="#142414" stroke-width="1"/>
<rect x="324.92" y="463.6" width="12.6" height="9.6" fill="#94f064" stroke="#142414" stroke-width="1"/>
<line x1="324.92" y1="468.7" x2="337.52" y2="468.7" stroke="#111" stroke-width="1.3"/>
<line x1="362.5" y1="434.6" x2="362.5" y2="477.4" stroke="#2a2a2a" stroke-width="1"/>
<rect x="359.35" y="449.1" width="6.3" height="25" fill="#94f064" stroke="#142414" stroke-width="1"/>
<rect x="356.2" y="456.4" width="12.6" height="13.7" fill="#94f064" stroke="#142414" stroke-width="1"/>
<line x1="356.2" y1="462.3" x2="368.8" y2="462.3" stroke="#111" stroke-width="1.3"/>
<line x1="393.78" y1="396.1" x2="393.78" y2="486.8" stroke="#2a2a2a" stroke-width="1"/>
<rect x="390.63" y="409.2" width="6.3" height="64.6" fill="#94f064" stroke="#142414" stroke-width="1"/>
<rect x="387.48" y="425.5" width="12.6" height="35.9" fill="#94f064" stroke="#142414" stroke-width="1"/>
<line x1="387.48" y1="442.4" x2="400.08" y2="442.4" stroke="#111" stroke-width="1.3"/>
<line x1="425.06" y1="384.3" x2="425.06" y2="448.7" stroke="#2a2a2a" stroke-width="1"/>
<rect x="421.91" y="406.1" width="6.3" height="32.1" fill="#94f064" stroke="#142414" stroke-width="1"/>
<rect x="418.76" y="409.2" width="12.6" height="20.5" fill="#94f064" stroke="#142414" stroke-width="1"/>
<line x1="418.76" y1="418.3" x2="431.36" y2="418.3" stroke="#111" stroke-width="1.3"/>
<line x1="456.34" y1="417" x2="456.34" y2="485.9" stroke="#2a2a2a" stroke-width="1"/>
<rect x="453.19" y="421.5" width="6.3" height="34.1" fill="#94f064" stroke="#142414" stroke-width="1"/>
<rect x="450.04" y="439.1" width="12.6" height="12.4" fill="#94f064" stroke="#142414" stroke-width="1"/>
<line x1="450.04" y1="450.2" x2="462.64" y2="450.2" stroke="#111" stroke-width="1.3"/>
<line x1="487.62" y1="434.2" x2="487.62" y2="486.5" stroke="#2a2a2a" stroke-width="1"/>
<rect x="484.47" y="442.8" width="6.3" height="24.4" fill="#94f064" stroke="#142414" stroke-width="1"/>
<rect x="481.32" y="446.6" width="12.6" height="14.8" fill="#94f064" stroke="#142414" stroke-width="1"/>
<line x1="481.32" y1="452.4" x2="493.92" y2="452.4" stroke="#111" stroke-width="1.3"/>
<line x1="518.9" y1="424.8" x2="518.9" y2="463.6" stroke="#2a2a2a" stroke-width="1"/>
<rect x="515.75" y="431.9" width="6.3" height="23.7" fill="#94f064" stroke="#142414" stroke-width="1"/>
<rect x="512.6" y="436.4" width="12.6" height="7.8" fill="#94f064" stroke="#142414" stroke-width="1"/>
<line x1="512.6" y1="438.8" x2="525.2" y2="438.8" stroke="#111" stroke-width="1.3"/>
<line x1="550.18" y1="423" x2="550.18" y2="468.7" stroke="#2a2a2a" stroke-width="1"/>
<rect x="547.03" y="440.6" width="6.3" height="24.8" fill="#94f064" stroke="#142414" stroke-width="1"/>
<rect x="543.88" y="447.3" width="12.6" height="14.1" fill="#94f064" stroke="#142414" stroke-width="1"/>
<line x1="543.88" y1="456.4" x2="556.48" y2="456.4" stroke="#111" stroke-width="1.3"/>
<line x1="581.46" y1="435.7" x2="581.46" y2="485" stroke="#2a2a2a" stroke-width="1"/>
<rect x="578.31" y="448.4" width="6.3" height="25.7" fill="#94f064" stroke="#142414" stroke-width="1"/>
<rect x="575.16" y="450.6" width="12.6" height="15.4" fill="#94f064" stroke="#142414" stroke-width="1"/>
<line x1="575.16" y1="456" x2="587.76" y2="456" stroke="#111" stroke-width="1.3"/>
<line x1="612.74" y1="445.1" x2="612.74" y2="486.8" stroke="#2a2a2a" stroke-width="1"/>
<rect x="609.59" y="454.2" width="6.3" height="21.8" fill="#94f064" stroke="#142414" stroke-width="1"/>
<rect x="606.44" y="457.4" width="12.6" height="10.9" fill="#94f064" stroke="#142414" stroke-width="1"/>
<line x1="606.44" y1="462.9" x2="619.04" y2="462.9" stroke="#111" stroke-width="1.3"/>
<line x1="644.02" y1="454.2" x2="644.02" y2="483.2" stroke="#2a2a2a" stroke-width="1"/>
<rect x="640.87" y="457.4" width="6.3" height="23.1" fill="#94f064" stroke="#142414" stroke-width="1"/>
<rect x="637.72" y="460.5" width="12.6" height="13.6" fill="#94f064" stroke="#142414" stroke-width="1"/>
<line x1="637.72" y1="467.2" x2="650.32" y2="467.2" stroke="#111" stroke-width="1.3"/>
<line x1="675.3" y1="439.7" x2="675.3" y2="487.7" stroke="#2a2a2a" stroke-width="1"/>
<rect x="672.15" y="451.5" width="6.3" height="33.2" fill="#94f064" stroke="#142414" stroke-width="1"/>
<rect x="669" y="453.8" width="12.6" height="24.5" fill="#94f064" stroke="#142414" stroke-width="1"/>
<line x1="669" y1="471.4" x2="681.6" y2="471.4" stroke="#111" stroke-width="1.3"/>
<line x1="706.58" y1="450.9" x2="706.58" y2="486.2" stroke="#2a2a2a" stroke-width="1"/>
<rect x="703.43" y="459.6" width="6.3" height="20" fill="#94f064" stroke="#142414" stroke-width="1"/>
<rect x="700.28" y="463.3" width="12.6" height="9" fill="#94f064" stroke="#142414" stroke-width="1"/>
<line x1="700.28" y1="466.9" x2="712.88" y2="466.9" stroke="#111" stroke-width="1.3"/>
<line x1="737.86" y1="452" x2="737.86" y2="489" stroke="#2a2a2a" stroke-width="1"/>
<rect x="734.71" y="461.1" width="6.3" height="23" fill="#94f064" stroke="#142414" stroke-width="1"/>
<rect x="731.56" y="466.5" width="12.6" height="11.3" fill="#94f064" stroke="#142414" stroke-width="1"/>
<line x1="731.56" y1="471.4" x2="744.16" y2="471.4" stroke="#111" stroke-width="1.3"/>
<line x1="769.14" y1="450.2" x2="769.14" y2="489" stroke="#2a2a2a" stroke-width="1"/>
<rect x="765.99" y="457.4" width="6.3" height="24.9" fill="#94f064" stroke="#142414" stroke-width="1"/>
<rect x="762.84" y="461.1" width="12.6" height="13.9" fill="#94f064" stroke="#142414" stroke-width="1"/>
<line x1="762.84" y1="466.9" x2="775.44" y2="466.9" stroke="#111" stroke-width="1.3"/>
<line x1="800.42" y1="437" x2="800.42" y2="487.7" stroke="#2a2a2a" stroke-width="1"/>
<rect x="797.27" y="453.8" width="6.3" height="23.6" fill="#94f064" stroke="#142414" stroke-width="1"/>
<rect x="794.12" y="458.7" width="12.6" height="15.4" fill="#94f064" stroke="#142414" stroke-width="1"/>
<line x1="794.12" y1="468.3" x2="806.72" y2="468.3" stroke="#111" stroke-width="1.3"/>
<polyline fill="none" stroke="#d02020" stroke-width="1.3" stroke-linejoin="round" points="49.7,470.5 80.98,474.5 112.26,480.5 143.54,459.6 174.82,456.4 206.1,452 237.38,452.7 268.66,428.8 299.94,436.4 331.22,464.2 362.5,470.1 393.78,436.4 425.06,409.7 456.34,440.6 487.62,451.5 518.9,437 550.18,447.8 581.46,448.7 612.74,470.5 644.02,473.2 675.3,452.4 706.58,462.3 737.86,471.4 769.14,461.1 800.42,454.2"/>
<polyline fill="none" stroke="#1c1cb8" stroke-width="1.3" stroke-linejoin="round" points="49.7,470.5 80.98,474.5 112.26,481 143.54,462.3 174.82,457.8 206.1,455.6 237.38,450.6 268.66,432.8 299.94,440.6 331.22,466.9 362.5,461.8 393.78,441.5 425.06,419.4 456.34,444.8 487.62,452.9 518.9,441.8 550.18,453.8 581.46,457 612.74,464.2 644.02,467.8 675.3,467.2 706.58,467.8 737.86,471.4 769.14,467.8 800.42,466.9"/>
</g>
<rect x="34.3" y="379.2" width="781.7" height="115.1" fill="none" stroke="#000" stroke-width="1.2"/>
<line x1="29.1" y1="454.5" x2="34.3" y2="454.5" stroke="#000" stroke-width="1"/>
<text transform="translate(18.35,458.5) scale(1.06,1)" x="0.06" y="0" font-size="10.91" fill="#1a1a1a" stroke="#1a1a1a" stroke-width="0.09" style="font-kerning:none">5</text>
<line x1="29.1" y1="413.4" x2="34.3" y2="413.4" stroke="#000" stroke-width="1"/>
<text transform="translate(11.79,417.4) scale(1.06,1)" x="0.06 6.24" y="0" font-size="10.91" fill="#1a1a1a" stroke="#1a1a1a" stroke-width="0.09" style="font-kerning:none">10</text>
<line x1="49.7" y1="494.3" x2="49.7" y2="499.7" stroke="#000" stroke-width="1"/>
<line x1="174.82" y1="494.3" x2="174.82" y2="499.7" stroke="#000" stroke-width="1"/>
<line x1="299.94" y1="494.3" x2="299.94" y2="499.7" stroke="#000" stroke-width="1"/>
<line x1="425.06" y1="494.3" x2="425.06" y2="499.7" stroke="#000" stroke-width="1"/>
<line x1="550.18" y1="494.3" x2="550.18" y2="499.7" stroke="#000" stroke-width="1"/>
<line x1="675.3" y1="494.3" x2="675.3" y2="499.7" stroke="#000" stroke-width="1"/>
<line x1="800.42" y1="494.3" x2="800.42" y2="499.7" stroke="#000" stroke-width="1"/>
<text transform="translate(34.3,516.7) scale(1.06,1)" x="0.07 7.53 18.54 22.62 26.61 33.95 44.98 52.16 59.5 63.95 71.51 75.61 83.06 87.39 94.42 98.13 101.73 106.89 115.52" y="0" font-size="12.91" fill="#1a1a1a" stroke="#1a1a1a" stroke-width="0.1" style="font-kerning:none">2m temperature (°C)</text>
<clipPath id="c3"><rect x="34.3" y="521.5" width="781.7" height="115.1"/></clipPath>
<g stroke="#e0e0e0" stroke-width="1" stroke-dasharray="2.4,1.6">
<line x1="49.7" y1="521.5" x2="49.7" y2="636.6"/>
<line x1="174.82" y1="521.5" x2="174.82" y2="636.6"/>
<line x1="299.94" y1="521.5" x2="299.94" y2="636.6"/>
<line x1="425.06" y1="521.5" x2="425.06" y2="636.6"/>
<line x1="550.18" y1="521.5" x2="550.18" y2="636.6"/>
<line x1="675.3" y1="521.5" x2="675.3" y2="636.6"/>
<line x1="800.42" y1="521.5" x2="800.42" y2="636.6"/>
<line x1="34.3" y1="619.3" x2="816" y2="619.3"/>
<line x1="34.3" y1="591.2" x2="816" y2="591.2"/>
<line x1="34.3" y1="563.3" x2="816" y2="563.3"/>
<line x1="34.3" y1="535.3" x2="816" y2="535.3"/>
</g>
<g clip-path="url(#c3)">
<line x1="49.7" y1="576.6" x2="49.7" y2="576.6" stroke="#2a2a2a" stroke-width="1"/>
<rect x="46.55" y="576.6" width="6.3" height="0" fill="#94f064" stroke="#142414" stroke-width="1"/>
<rect x="43.4" y="576.6" width="12.6" height="0" fill="#94f064" stroke="#142414" stroke-width="1"/>
<line x1="43.4" y1="576.6" x2="56" y2="576.6" stroke="#111" stroke-width="1.3"/>
<line x1="80.98" y1="602" x2="80.98" y2="603.8" stroke="#2a2a2a" stroke-width="1"/>
<rect x="77.83" y="602.3" width="6.3" height="1.2" fill="#94f064" stroke="#142414" stroke-width="1"/>
<rect x="74.68" y="602.5" width="12.6" height="0.8" fill="#94f064" stroke="#142414" stroke-width="1"/>
<line x1="74.68" y1="602.9" x2="87.28" y2="602.9" stroke="#111" stroke-width="1.3"/>
<line x1="112.26" y1="598" x2="112.26" y2="599.8" stroke="#2a2a2a" stroke-width="1"/>
<rect x="109.11" y="598.3" width="6.3" height="1.2" fill="#94f064" stroke="#142414" stroke-width="1"/>
<rect x="105.96" y="598.5" width="12.6" height="0.8" fill="#94f064" stroke="#142414" stroke-width="1"/>
<line x1="105.96" y1="598.9" x2="118.56" y2="598.9" stroke="#111" stroke-width="1.3"/>
<line x1="143.54" y1="566.5" x2="143.54" y2="569" stroke="#2a2a2a" stroke-width="1"/>
<rect x="140.39" y="567" width="6.3" height="1.4" fill="#94f064" stroke="#142414" stroke-width="1"/>
<rect x="137.24" y="567.3" width="12.6" height="0.8" fill="#94f064" stroke="#142414" stroke-width="1"/>
<line x1="137.24" y1="567.7" x2="149.84" y2="567.7" stroke="#111" stroke-width="1.3"/>
<line x1="174.82" y1="532" x2="174.82" y2="534.5" stroke="#2a2a2a" stroke-width="1"/>
<rect x="171.67" y="532.5" width="6.3" height="1.4" fill="#94f064" stroke="#142414" stroke-width="1"/>
<rect x="168.52" y="532.8" width="12.6" height="0.8" fill="#94f064" stroke="#142414" stroke-width="1"/>
<line x1="168.52" y1="533.2" x2="181.12" y2="533.2" stroke="#111" stroke-width="1.3"/>
<line x1="206.1" y1="557.7" x2="206.1" y2="569.3" stroke="#2a2a2a" stroke-width="1"/>
<rect x="202.95" y="561.5" width="6.3" height="7" fill="#94f064" stroke="#142414" stroke-width="1"/>
<rect x="199.8" y="562.6" width="12.6" height="4.9" fill="#94f064" stroke="#142414" stroke-width="1"/>
<line x1="199.8" y1="565" x2="212.4" y2="565" stroke="#111" stroke-width="1.3"/>
<line x1="237.38" y1="554.5" x2="237.38" y2="568.6" stroke="#2a2a2a" stroke-width="1"/>
<rect x="234.23" y="557.7" width="6.3" height="9.1" fill="#94f064" stroke="#142414" stroke-width="1"/>
<rect x="231.08" y="559.5" width="12.6" height="4.4" fill="#94f064" stroke="#142414" stroke-width="1"/>
<line x1="231.08" y1="562.1" x2="243.68" y2="562.1" stroke="#111" stroke-width="1.3"/>
<line x1="268.66" y1="554.1" x2="268.66" y2="568.6" stroke="#2a2a2a" stroke-width="1"/>
<rect x="265.51" y="557.2" width="6.3" height="9.6" fill="#94f064" stroke="#142414" stroke-width="1"/>
<rect x="262.36" y="560.3" width="12.6" height="3.2" fill="#94f064" stroke="#142414" stroke-width="1"/>
<line x1="262.36" y1="562.1" x2="274.96" y2="562.1" stroke="#111" stroke-width="1.3"/>
<line x1="299.94" y1="546.5" x2="299.94" y2="550" stroke="#2a2a2a" stroke-width="1"/>
<rect x="296.79" y="547.2" width="6.3" height="2.3" fill="#94f064" stroke="#142414" stroke-width="1"/>
<rect x="293.64" y="547.5" width="12.6" height="1.4" fill="#94f064" stroke="#142414" stroke-width="1"/>
<line x1="293.64" y1="548.1" x2="306.24" y2="548.1" stroke="#111" stroke-width="1.3"/>
<line x1="331.22" y1="577.7" x2="331.22" y2="584.9" stroke="#2a2a2a" stroke-width="1"/>
<rect x="328.07" y="578.5" width="6.3" height="4.5" fill="#94f064" stroke="#142414" stroke-width="1"/>
<rect x="324.92" y="579" width="12.6" height="3.6" fill="#94f064" stroke="#142414" stroke-width="1"/>
<line x1="324.92" y1="580.8" x2="337.52" y2="580.8" stroke="#111" stroke-width="1.3"/>
<line x1="362.5" y1="571.2" x2="362.5" y2="597.6" stroke="#2a2a2a" stroke-width="1"/>
<rect x="359.35" y="575.3" width="6.3" height="14.5" fill="#94f064" stroke="#142414" stroke-width="1"/>
<rect x="356.2" y="579.5" width="12.6" height="7.3" fill="#94f064" stroke="#142414" stroke-width="1"/>
<line x1="356.2" y1="583.1" x2="368.8" y2="583.1" stroke="#111" stroke-width="1.3"/>
<line x1="393.78" y1="557.7" x2="393.78" y2="595.8" stroke="#2a2a2a" stroke-width="1"/>
<rect x="390.63" y="561.4" width="6.3" height="22.1" fill="#94f064" stroke="#142414" stroke-width="1"/>
<rect x="387.48" y="568.6" width="12.6" height="9.1" fill="#94f064" stroke="#142414" stroke-width="1"/>
<line x1="387.48" y1="574.1" x2="400.08" y2="574.1" stroke="#111" stroke-width="1.3"/>
<line x1="425.06" y1="552.3" x2="425.06" y2="581.7" stroke="#2a2a2a" stroke-width="1"/>
<rect x="421.91" y="557.2" width="6.3" height="21.8" fill="#94f064" stroke="#142414" stroke-width="1"/>
<rect x="418.76" y="566.3" width="12.6" height="9.6" fill="#94f064" stroke="#142414" stroke-width="1"/>
<line x1="418.76" y1="569" x2="431.36" y2="569" stroke="#111" stroke-width="1.3"/>
<line x1="456.34" y1="581.3" x2="456.34" y2="603.8" stroke="#2a2a2a" stroke-width="1"/>
<rect x="453.19" y="586" width="6.3" height="15.3" fill="#94f064" stroke="#142414" stroke-width="1"/>
<rect x="450.04" y="593.5" width="12.6" height="4.9" fill="#94f064" stroke="#142414" stroke-width="1"/>
<line x1="450.04" y1="596.2" x2="462.64" y2="596.2" stroke="#111" stroke-width="1.3"/>
<line x1="487.62" y1="598" x2="487.62" y2="619.4" stroke="#2a2a2a" stroke-width="1"/>
<rect x="484.47" y="601.6" width="6.3" height="10.9" fill="#94f064" stroke="#142414" stroke-width="1"/>
<rect x="481.32" y="603.8" width="12.6" height="6" fill="#94f064" stroke="#142414" stroke-width="1"/>
<line x1="481.32" y1="606.7" x2="493.92" y2="606.7" stroke="#111" stroke-width="1.3"/>
<line x1="518.9" y1="574.1" x2="518.9" y2="603.1" stroke="#2a2a2a" stroke-width="1"/>
<rect x="515.75" y="579.5" width="6.3" height="13.1" fill="#94f064" stroke="#142414" stroke-width="1"/>
<rect x="512.6" y="581.7" width="12.6" height="6.9" fill="#94f064" stroke="#142414" stroke-width="1"/>
<line x1="512.6" y1="584.4" x2="525.2" y2="584.4" stroke="#111" stroke-width="1.3"/>
<line x1="550.18" y1="548.7" x2="550.18" y2="573" stroke="#2a2a2a" stroke-width="1"/>
<rect x="547.03" y="553.6" width="6.3" height="16.8" fill="#94f064" stroke="#142414" stroke-width="1"/>
<rect x="543.88" y="555.4" width="12.6" height="6" fill="#94f064" stroke="#142414" stroke-width="1"/>
<line x1="543.88" y1="558.5" x2="556.48" y2="558.5" stroke="#111" stroke-width="1.3"/>
<line x1="581.46" y1="579.9" x2="581.46" y2="609.2" stroke="#2a2a2a" stroke-width="1"/>
<rect x="578.31" y="584.9" width="6.3" height="16.7" fill="#94f064" stroke="#142414" stroke-width="1"/>
<rect x="575.16" y="587.5" width="12.6" height="7.2" fill="#94f064" stroke="#142414" stroke-width="1"/>
<line x1="575.16" y1="591.1" x2="587.76" y2="591.1" stroke="#111" stroke-width="1.3"/>
<line x1="612.74" y1="584.4" x2="612.74" y2="631.6" stroke="#2a2a2a" stroke-width="1"/>
<rect x="609.59" y="589.3" width="6.3" height="19.6" fill="#94f064" stroke="#142414" stroke-width="1"/>
<rect x="606.44" y="594.4" width="12.6" height="10.9" fill="#94f064" stroke="#142414" stroke-width="1"/>
<line x1="606.44" y1="599.8" x2="619.04" y2="599.8" stroke="#111" stroke-width="1.3"/>
<line x1="644.02" y1="563.2" x2="644.02" y2="616.1" stroke="#2a2a2a" stroke-width="1"/>
<rect x="640.87" y="567.5" width="6.3" height="39.2" fill="#94f064" stroke="#142414" stroke-width="1"/>
<rect x="637.72" y="569.3" width="12.6" height="12.7" fill="#94f064" stroke="#142414" stroke-width="1"/>
<line x1="637.72" y1="573.5" x2="650.32" y2="573.5" stroke="#111" stroke-width="1.3"/>
<line x1="675.3" y1="539" x2="675.3" y2="592.6" stroke="#2a2a2a" stroke-width="1"/>
<rect x="672.15" y="540.9" width="6.3" height="27.7" fill="#94f064" stroke="#142414" stroke-width="1"/>
<rect x="669" y="544.5" width="12.6" height="13.2" fill="#94f064" stroke="#142414" stroke-width="1"/>
<line x1="669" y1="547.6" x2="681.6" y2="547.6" stroke="#111" stroke-width="1.3"/>
<line x1="706.58" y1="563.9" x2="706.58" y2="618.9" stroke="#2a2a2a" stroke-width="1"/>
<rect x="703.43" y="569.2" width="6.3" height="29.5" fill="#94f064" stroke="#142414" stroke-width="1"/>
<rect x="700.28" y="576" width="12.6" height="11.3" fill="#94f064" stroke="#142414" stroke-width="1"/>
<line x1="700.28" y1="578.7" x2="712.88" y2="578.7" stroke="#111" stroke-width="1.3"/>
<line x1="737.86" y1="569.3" x2="737.86" y2="621.6" stroke="#2a2a2a" stroke-width="1"/>
<rect x="734.71" y="579.5" width="6.3" height="25.4" fill="#94f064" stroke="#142414" stroke-width="1"/>
<rect x="731.56" y="583.5" width="12.6" height="10.9" fill="#94f064" stroke="#142414" stroke-width="1"/>
<line x1="731.56" y1="586.8" x2="744.16" y2="586.8" stroke="#111" stroke-width="1.3"/>
<line x1="769.14" y1="548.1" x2="769.14" y2="604.3" stroke="#2a2a2a" stroke-width="1"/>
<rect x="765.99" y="555.9" width="6.3" height="32.7" fill="#94f064" stroke="#142414" stroke-width="1"/>
<rect x="762.84" y="558.5" width="12.6" height="15" fill="#94f064" stroke="#142414" stroke-width="1"/>
<line x1="762.84" y1="564.4" x2="775.44" y2="564.4" stroke="#111" stroke-width="1.3"/>
<line x1="800.42" y1="526.3" x2="800.42" y2="593.5" stroke="#2a2a2a" stroke-width="1"/>
<rect x="797.27" y="531.8" width="6.3" height="29.6" fill="#94f064" stroke="#142414" stroke-width="1"/>
<rect x="794.12" y="534.9" width="12.6" height="18.7" fill="#94f064" stroke="#142414" stroke-width="1"/>
<line x1="794.12" y1="540.9" x2="806.72" y2="540.9" stroke="#111" stroke-width="1.3"/>
<polyline fill="none" stroke="#d02020" stroke-width="1.3" stroke-linejoin="round" points="49.7,576.6 80.98,602.9 112.26,598.9 143.54,567.7 174.82,533.2 206.1,561.4 237.38,558.5 268.66,562.1 299.94,548.1 331.22,579 362.5,583.1 393.78,572.2 425.06,566.8 456.34,594.7 487.62,604.3 518.9,583.5 550.18,558.5 581.46,588.6 612.74,597.1 644.02,571.7 675.3,548.7 706.58,576.4 737.86,582.6 769.14,557.2 800.42,536"/>
<polyline fill="none" stroke="#1c1cb8" stroke-width="1.3" stroke-linejoin="round" points="49.7,576.6 80.98,602.9 112.26,598.9 143.54,567.7 174.82,533.2 206.1,564.1 237.38,561.4 268.66,562.1 299.94,548.1 331.22,580.8 362.5,583.5 393.78,574.8 425.06,569 456.34,595.3 487.62,604.9 518.9,585.3 550.18,560.3 581.46,592.2 612.74,598.9 644.02,579 675.3,553 706.58,582 737.86,588.9 769.14,566.3 800.42,545.4"/>
</g>
<rect x="34.3" y="521.5" width="781.7" height="115.1" fill="none" stroke="#000" stroke-width="1.2"/>
<line x1="29.1" y1="619.3" x2="34.3" y2="619.3" stroke="#000" stroke-width="1"/>
<text transform="translate(18.35,623.3) scale(1.06,1)" x="0.06" y="0" font-size="10.91" fill="#1a1a1a" stroke="#1a1a1a" stroke-width="0.09" style="font-kerning:none">0</text>
<line x1="29.1" y1="591.2" x2="34.3" y2="591.2" stroke="#000" stroke-width="1"/>
<text transform="translate(18.35,595.2) scale(1.06,1)" x="0.06" y="0" font-size="10.91" fill="#1a1a1a" stroke="#1a1a1a" stroke-width="0.09" style="font-kerning:none">5</text>
<line x1="29.1" y1="563.3" x2="34.3" y2="563.3" stroke="#000" stroke-width="1"/>
<text transform="translate(11.79,567.3) scale(1.06,1)" x="0.06 6.24" y="0" font-size="10.91" fill="#1a1a1a" stroke="#1a1a1a" stroke-width="0.09" style="font-kerning:none">10</text>
<line x1="29.1" y1="535.3" x2="34.3" y2="535.3" stroke="#000" stroke-width="1"/>
<text transform="translate(11.79,539.3) scale(1.06,1)" x="0.06 6.24" y="0" font-size="10.91" fill="#1a1a1a" stroke="#1a1a1a" stroke-width="0.09" style="font-kerning:none">15</text>
<line x1="49.7" y1="636.6" x2="49.7" y2="642" stroke="#000" stroke-width="1"/>
<line x1="174.82" y1="636.6" x2="174.82" y2="642" stroke="#000" stroke-width="1"/>
<line x1="299.94" y1="636.6" x2="299.94" y2="642" stroke="#000" stroke-width="1"/>
<line x1="425.06" y1="636.6" x2="425.06" y2="642" stroke="#000" stroke-width="1"/>
<line x1="550.18" y1="636.6" x2="550.18" y2="642" stroke="#000" stroke-width="1"/>
<line x1="675.3" y1="636.6" x2="675.3" y2="642" stroke="#000" stroke-width="1"/>
<line x1="800.42" y1="636.6" x2="800.42" y2="642" stroke="#000" stroke-width="1"/>
<text transform="translate(39.62,654.6) scale(1.06,1)" x="0.06 6.24 12.36" y="0" font-size="10.91" fill="#1a1a1a" stroke="#1a1a1a" stroke-width="0.09" style="font-kerning:none">12Z</text>
<text transform="translate(33.18,667) scale(1.06,1)" x="0.06 6.24 12.16 19.8 25.77" y="0" font-size="10.91" fill="#1a1a1a" stroke="#1a1a1a" stroke-width="0.09" style="font-kerning:none">27Dec</text>
<text transform="translate(164.74,654.6) scale(1.06,1)" x="0.06 6.24 12.36" y="0" font-size="10.91" fill="#1a1a1a" stroke="#1a1a1a" stroke-width="0.09" style="font-kerning:none">12Z</text>
<text transform="translate(158.3,667) scale(1.06,1)" x="0.06 6.24 12.16 19.8 25.77" y="0" font-size="10.91" fill="#1a1a1a" stroke="#1a1a1a" stroke-width="0.09" style="font-kerning:none">28Dec</text>
<text transform="translate(289.86,654.6) scale(1.06,1)" x="0.06 6.24 12.36" y="0" font-size="10.91" fill="#1a1a1a" stroke="#1a1a1a" stroke-width="0.09" style="font-kerning:none">12Z</text>
<text transform="translate(283.42,667) scale(1.06,1)" x="0.06 6.24 12.16 19.8 25.77" y="0" font-size="10.91" fill="#1a1a1a" stroke="#1a1a1a" stroke-width="0.09" style="font-kerning:none">29Dec</text>
<text transform="translate(414.98,654.6) scale(1.06,1)" x="0.06 6.24 12.36" y="0" font-size="10.91" fill="#1a1a1a" stroke="#1a1a1a" stroke-width="0.09" style="font-kerning:none">12Z</text>
<text transform="translate(408.54,667) scale(1.06,1)" x="0.06 6.24 12.16 19.8 25.77" y="0" font-size="10.91" fill="#1a1a1a" stroke="#1a1a1a" stroke-width="0.09" style="font-kerning:none">30Dec</text>
<text transform="translate(540.1,654.6) scale(1.06,1)" x="0.06 6.24 12.36" y="0" font-size="10.91" fill="#1a1a1a" stroke="#1a1a1a" stroke-width="0.09" style="font-kerning:none">12Z</text>
<text transform="translate(533.66,667) scale(1.06,1)" x="0.06 6.24 12.16 19.8 25.77" y="0" font-size="10.91" fill="#1a1a1a" stroke="#1a1a1a" stroke-width="0.09" style="font-kerning:none">31Dec</text>
<text transform="translate(665.22,654.6) scale(1.06,1)" x="0.06 6.24 12.36" y="0" font-size="10.91" fill="#1a1a1a" stroke="#1a1a1a" stroke-width="0.09" style="font-kerning:none">12Z</text>
<text transform="translate(660.81,667) scale(1.06,1)" x="0.06 6.24 11.07 15.17 21.23" y="0" font-size="10.91" fill="#1a1a1a" stroke="#1a1a1a" stroke-width="0.09" style="font-kerning:none">01Jan</text>
<text transform="translate(790.34,654.6) scale(1.06,1)" x="0.06 6.24 12.36" y="0" font-size="10.91" fill="#1a1a1a" stroke="#1a1a1a" stroke-width="0.09" style="font-kerning:none">12Z</text>
<text transform="translate(785.93,667) scale(1.06,1)" x="0.06 6.24 11.07 15.17 21.23" y="0" font-size="10.91" fill="#1a1a1a" stroke="#1a1a1a" stroke-width="0.09" style="font-kerning:none">02Jan</text>
</svg>
</body></html>
